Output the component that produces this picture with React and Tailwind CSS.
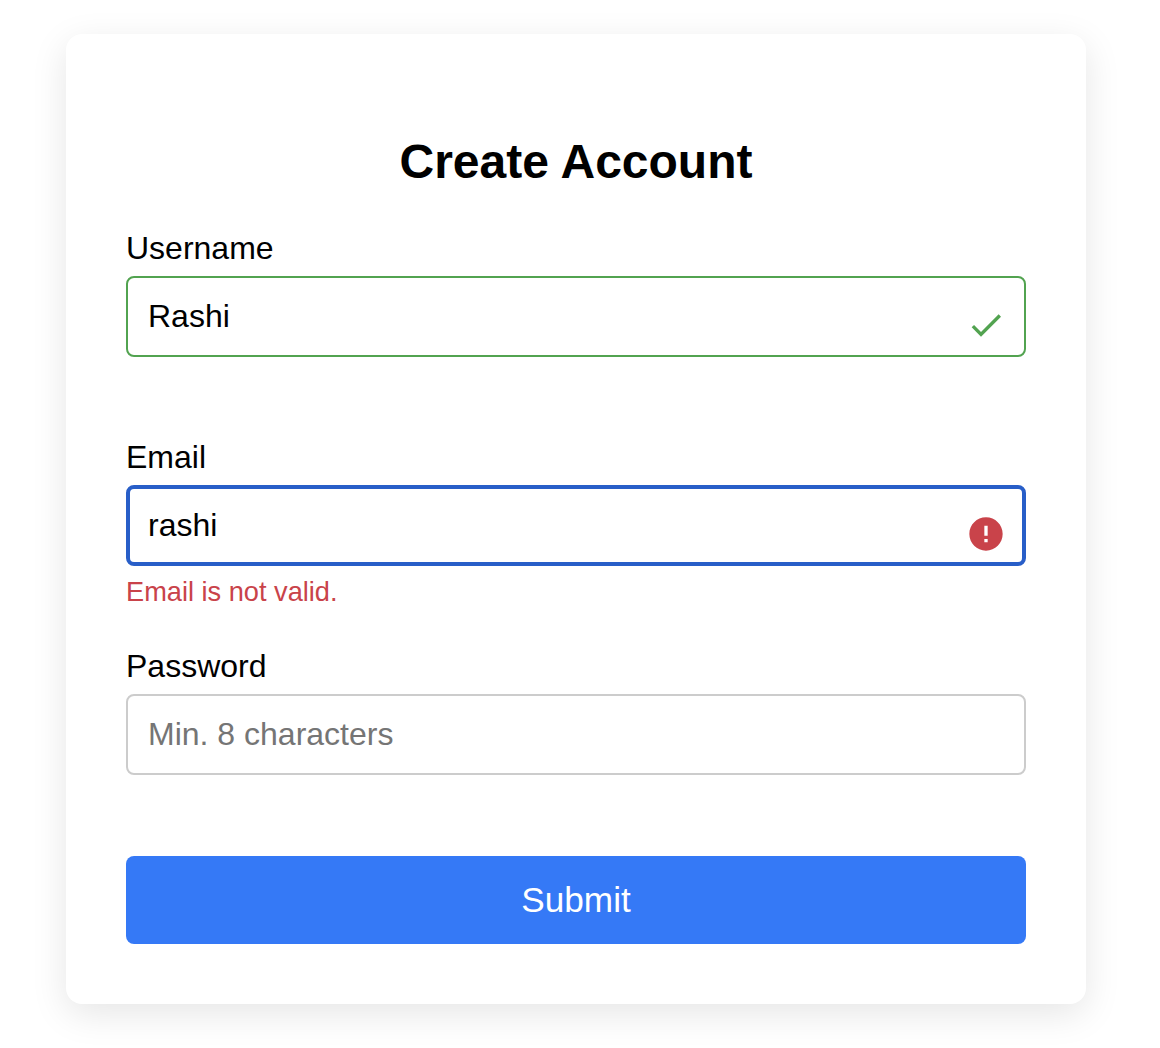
import React, { useState } from 'react'
import { MdCheck, MdError } from 'react-icons/md'

const borders = {
  valid: 'border-2 border-[#52a350] px-5',
  invalid: 'border-4 border-[#285ec8] px-[18px]',
  idle: 'border-2 border-[#cccccc] px-5',
}

const Field = ({ label, name, type = 'text', status = 'idle', error, ...rest }) => (
  <div className="h-[209px]">
    <label htmlFor={name} className="block text-[32px] leading-[38px] mb-[9px]">
      {label}
    </label>
    <div className="relative">
      <input
        id={name}
        name={name}
        type={type}
        autoComplete="off"
        className={`block w-full h-[81px] rounded-lg bg-white text-[32px] outline-none placeholder:text-[#757575] ${borders[status]}`}
        {...rest}
      />
      {status === 'valid' && (
        <MdCheck className="absolute right-5 top-[29px] size-10 text-[#52a350]" />
      )}
      {status === 'invalid' && (
        <MdError className="absolute right-5 top-[29px] size-10 text-[#c9434a]" />
      )}
    </div>
    {error && (
      <p className="mt-2.5 text-[27.2px] leading-[32px] text-[#c9434a]">{error}</p>
    )}
  </div>
)

const App = () => {
  const [values, setValues] = useState({ username: 'Rashi', email: 'rashi', password: '' })

  const handleChange = (e) => {
    setValues({ ...values, [e.target.name]: e.target.value })
  }

  const emailOk = /^\S+@\S+\.\S+$/.test(values.email)

  return (
    <div className="h-[1048px] overflow-hidden bg-white pt-[34px] pl-[66px] text-black font-['Liberation_Sans',Arial,sans-serif]">
      <div className="w-[1020px] h-[970px] rounded-2xl bg-white px-[60px] pt-[99px] shadow-[0_10px_36px_rgba(0,0,0,0.1)]">
        <h2 className="mb-[38px] text-center text-[48px] leading-[58px] font-bold">
          Create Account
        </h2>
        <form onSubmit={(e) => e.preventDefault()}>
          <Field
            label="Username"
            name="username"
            value={values.username}
            onChange={handleChange}
            status={values.username ? 'valid' : 'idle'}
          />
          <Field
            label="Email"
            name="email"
            value={values.email}
            onChange={handleChange}
            status={emailOk ? 'valid' : 'invalid'}
            error={emailOk ? null : 'Email is not valid.'}
          />
          <Field
            label="Password"
            name="password"
            type="password"
            placeholder="Min. 8 characters"
            value={values.password}
            onChange={handleChange}
          />
          <button
            type="submit"
            className="block w-full h-[88px] rounded-lg bg-[#3579f6] text-[35.2px] text-white"
          >
            Submit
          </button>
        </form>
      </div>
    </div>
  )
}

export default App
